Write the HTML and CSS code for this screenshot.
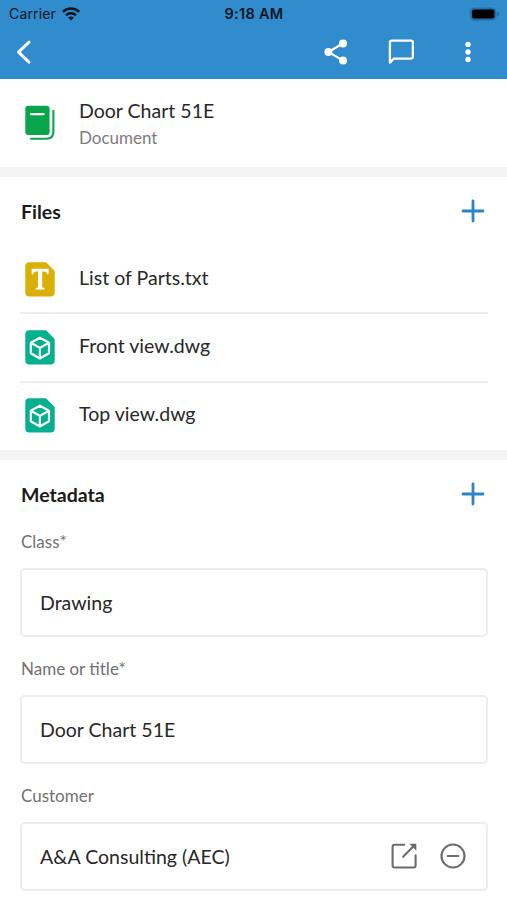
FILE: index.html
```html
<!DOCTYPE html>
<html lang="en">
<head>
<meta charset="utf-8">
<title>Door Chart 51E</title>
<link rel="stylesheet" href="styles.css">
</head>
<body>
<header class="top">
  <div class="status">
    <div class="carrier">
      <span>Carrier</span>
      <svg width="18" height="14" viewBox="0 0 18 14" fill="none" stroke="#06141f" stroke-width="2.5"><path d="M.9 4.8a11.6 11.6 0 0 1 16.2 0M4 8.3a7.1 7.1 0 0 1 10 0"/><path d="M9 13.6 6.1 10.8a4.2 4.2 0 0 1 5.8 0z" fill="#06141f" stroke="none"/></svg>
    </div>
    <span class="time">9:18 AM</span>
    <svg class="battery" width="31" height="14" viewBox="0 0 31 14"><rect x="1.2" y=".9" width="26" height="12.4" rx="4" fill="#236ea6" stroke="#2877b0" stroke-width="1"/><rect x="3" y="2.6" width="22.4" height="9" rx="2" fill="#000"/><path d="M28.600 5v4.200q1.600-.5 1.600-2.100T28.600 5z" fill="#2169a0"/></svg>
  </div>
  <nav class="toolbar">
    <svg class="back" width="18" height="26" viewBox="0 0 18 26" fill="none" stroke="#fff" stroke-width="2.9" stroke-linecap="round" stroke-linejoin="round"><path d="M14 3.100 3.500 13.100l10.500 10"/></svg>
    <svg class="share" width="26" height="26" viewBox="0 0 26 26" fill="#fff"><path d="M20 4.200 5.500 13 20 21.600" fill="none" stroke="#fff" stroke-width="2.200"/><circle cx="20" cy="4.500" r="4"/><circle cx="5.400" cy="13" r="4"/><circle cx="20" cy="21.500" r="4"/></svg>
    <svg class="chat" width="26" height="26" viewBox="0 0 26 26" fill="none" stroke="#fff" stroke-width="2.300" stroke-linejoin="round"><path d="M1.900 23.600V3.600q0-2 2-2h19q2 0 2 2v14q0 2-2 2H5.900z"/></svg>
    <svg class="more" width="8" height="26" viewBox="0 0 8 26" fill="#fff"><circle cx="4" cy="5.400" r="2.700"/><circle cx="4" cy="13" r="2.700"/><circle cx="4" cy="20.500" r="2.700"/></svg>
  </nav>
</header>
<main>
  <section class="object">
    <svg class="icon" width="30" height="36" viewBox="0 0 30 36"><rect x=".3" y=".7" width="24.300" height="29.200" rx="3" fill="#09a54b"/><path d="M6 9.200h12.600" stroke="#fff" stroke-width="2.200" stroke-linecap="round"/><path d="M28.400 6v20.700q0 7-7 7H6" fill="none" stroke="#09a54b" stroke-width="2.100" stroke-linecap="round"/></svg>
    <div>
      <h1 class="name">Door Chart 51E</h1>
      <p class="kind">Document</p>
    </div>
  </section>
  <section class="files">
    <div class="heading">
      <h2>Files</h2>
      <svg class="plus" width="24" height="24" viewBox="0 0 24 24"><path d="M12 2v20M2 12h20"/></svg>
    </div>
    <ul>
      <li><svg class="icon" width="30" height="35" viewBox="0 0 30 35"><path d="M4 .3h17L29.700 9v21.500q0 4-4 4H4.300q-4 0-4-4V4.300q0-4 4-4z" fill="#dbb006"/><path d="M6.700 6.700h16.900v5.600h-1.500q-.4-2.900-2.800-2.900h-2.100v15.100q0 1.500 2.200 1.600v1.400h-8.600v-1.400q2.200-.1 2.200-1.600V9.400h-2q-2.400 0-2.800 2.900H6.700z" fill="#fff"/></svg><span>List of Parts.txt</span></li>
      <li><svg class="icon" width="30" height="35" viewBox="0 0 30 35"><path d="M4 .3h17L29.700 9v21.500q0 4-4 4H4.300q-4 0-4-4V4.300q0-4 4-4z" fill="#05b08f"/><path d="M14.900 7.700 24 12.800v10.500l-9.100 5.200-9.100-5.200V12.800zM5.800 12.800l9.100 5.100 9.100-5.100M14.900 17.900v10.600" fill="none" stroke="#fff" stroke-width="2.200" stroke-linejoin="round"/></svg><span>Front view.dwg</span></li>
      <li><svg class="icon" width="30" height="35" viewBox="0 0 30 35"><path d="M4 .3h17L29.700 9v21.500q0 4-4 4H4.300q-4 0-4-4V4.300q0-4 4-4z" fill="#05b08f"/><path d="M14.900 7.700 24 12.800v10.500l-9.100 5.200-9.100-5.200V12.800zM5.800 12.800l9.100 5.100 9.100-5.100M14.900 17.900v10.600" fill="none" stroke="#fff" stroke-width="2.200" stroke-linejoin="round"/></svg><span>Top view.dwg</span></li>
    </ul>
  </section>
  <section class="metadata">
    <div class="heading">
      <h2>Metadata</h2>
      <svg class="plus" width="24" height="24" viewBox="0 0 24 24"><path d="M12 2v20M2 12h20"/></svg>
    </div>
    <div class="field"><div class="label">Class*</div><div class="value"><span>Drawing</span></div></div>
    <div class="field"><div class="label">Name or title*</div><div class="value"><span>Door Chart 51E</span></div></div>
    <div class="field"><div class="label">Customer</div><div class="value"><span>A&amp;A Consulting (AEC)</span>
      <span class="actions">
        <svg width="26" height="26" viewBox="0 0 26 26" fill="none" stroke="#6b6b6b" stroke-width="2.100" stroke-linecap="round"><path d="M13.200 1.700H3.600q-2 0-2 2v18.800q0 2 2 2h19q2 0 2-2V12.200M12.100 13.800 21.500 4.300"/><path d="M18.300.8h7v7z" fill="#6b6b6b" stroke="none"/></svg>
        <svg width="26" height="26" viewBox="0 0 26 26" fill="none" stroke="#6b6b6b" stroke-width="2.100" stroke-linecap="round"><circle cx="13" cy="13" r="11.500"/><path d="M7.700 13h10.600"/></svg>
      </span></div></div>
  </section>
</main>
</body>
</html>
```

FILE: styles.css
```css
* { box-sizing: border-box; }
body {
  margin: 0;
  height: 900px;
  overflow: hidden;
  background: #fff;
  color: #282828;
  font: 19.55px/24px Lato, sans-serif;
}
h1, h2, p, ul { margin: 0; padding: 0; }
svg { display: block; flex: none; }
.top { height: 79px; background: #308ccd; }
.status {
  display: grid;
  grid-template-columns: 1fr auto 1fr;
  align-items: center;
  height: 27px;
  padding: 0 7px 0 9px;
  color: #06141f;
  font: 14px/27px Inter, sans-serif;
}
.carrier { display: flex; align-items: center; gap: 6px; letter-spacing: .15px; }
.time { margin-right: 1px; font-weight: 600; font-size: 14.5px; letter-spacing: .3px; }
.battery { justify-self: end; }
.toolbar { display: flex; align-items: center; height: 50px; padding: 0 35px 0 15px; }
.share { margin-left: auto; }
.chat { margin-left: 39px; }
.more { margin-left: 50px; }
.object {
  display: flex;
  align-items: center;
  height: 88px;
  padding-left: 25px;
}
.icon { margin-right: 24px; }
.name { padding-top: 1px; font-size: 19.55px; font-weight: 400; line-height: 28px; }
.kind { color: #7d7d7d; font-size: 17px; line-height: 26px; }
.files, .metadata { border-top: 10px solid #f4f4f4; }
.files { height: 283px; }
.metadata { padding: 0 19px 0 20px; }
.heading { display: flex; align-items: center; justify-content: space-between; height: 68px; }
.files .heading { height: 67px; padding: 1px 19px 0 20px; }
.heading .plus { margin-right: 3px; }
h2 { padding: 1px 0 0 1px; color: #1b1b1b; font-size: 19.55px; font-weight: 700; }
.plus { fill: none; stroke: #2a84c6; stroke-width: 2.8; stroke-linecap: round; }
ul { list-style: none; margin: 0 19px 0 20px; }
li { display: flex; align-items: center; height: 68.3px; padding-left: 5px; }
li:first-child { padding-top: 2px; }
li + li { border-top: 2px solid #ededed; }
li span { padding-bottom: 3px; }
.field { height: 127px; }
.label { height: 40px; padding: 1px 0 0 1px; color: #717171; font-size: 17px; line-height: 26px; }
.value {
  display: flex;
  align-items: center;
  justify-content: space-between;
  height: 69px;
  padding: 0 20px 0 18px;
  border: 2px solid #ededed;
  border-radius: 5px;
}
.actions { display: flex; gap: 23px; padding-bottom: 2px; }
```
